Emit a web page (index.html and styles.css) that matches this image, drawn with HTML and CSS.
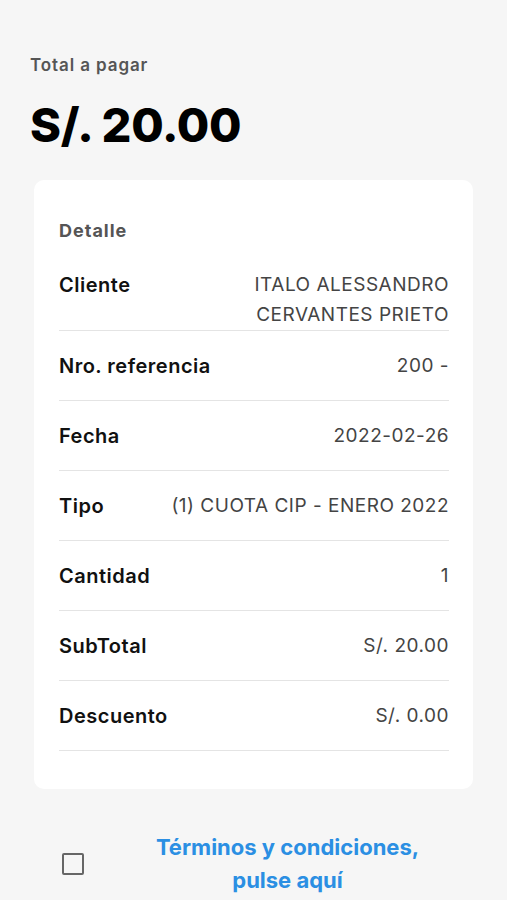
FILE: index.html
```html
<!DOCTYPE html>
<html lang="es">
<head>
<meta charset="utf-8">
<title>Total a pagar</title>
<link rel="stylesheet" href="styles.css">
</head>
<body>
<main class="page">
  <section class="summary">
    <div class="summary-label">Total a pagar</div>
    <div class="summary-amount">S/. 20.00</div>
  </section>
  <section class="card">
    <div class="card-title">Detalle</div>
    <div class="row">
      <div class="row-label">Cliente</div>
      <div class="row-value">ITALO ALESSANDRO<br>CERVANTES PRIETO</div>
    </div>
    <div class="row">
      <div class="row-label">Nro. referencia</div>
      <div class="row-value">200 -</div>
    </div>
    <div class="row">
      <div class="row-label">Fecha</div>
      <div class="row-value">2022-02-26</div>
    </div>
    <div class="row">
      <div class="row-label">Tipo</div>
      <div class="row-value">(1) CUOTA CIP - ENERO 2022</div>
    </div>
    <div class="row">
      <div class="row-label">Cantidad</div>
      <div class="row-value">1</div>
    </div>
    <div class="row">
      <div class="row-label">SubTotal</div>
      <div class="row-value">S/. 20.00</div>
    </div>
    <div class="row">
      <div class="row-label">Descuento</div>
      <div class="row-value">S/. 0.00</div>
    </div>
  </section>
  <section class="terms">
    <span class="checkbox"></span>
    <a class="terms-link" href="#">Términos y condiciones,<br>pulse aquí</a>
  </section>
</main>
</body>
</html>
```

FILE: styles.css
```css
* { box-sizing: border-box; }

html, body {
  margin: 0;
  padding: 0;
  background: #f6f6f6;
}

body {
  font-family: Inter, "Open Sans", "DejaVu Sans", sans-serif;
  color: #111;
}

.page {
  padding: 54px 0 0;
}

.summary {
  padding: 0 30px;
}

.summary-label {
  font-size: 17px;
  font-weight: 600;
  color: #555;
  line-height: 22px;
  letter-spacing: 0.9px;
}

.summary-amount {
  margin-top: 20px;
  font-size: 47px;
  font-weight: 800;
  line-height: 58px;
  color: #000;
  letter-spacing: -0.3px;
}

.card {
  margin: 26px 34px 0;
  background: #fff;
  border-radius: 10px;
  padding: 38px 24px 38px 25px;
}

.card-title {
  font-size: 18px;
  font-weight: 700;
  color: #555;
  line-height: 26px;
  letter-spacing: 1px;
  margin-bottom: 6px;
}

.row {
  display: flex;
  justify-content: space-between;
  align-items: flex-start;
  min-height: 70px;
  padding-top: 20px;
  border-bottom: 1px solid #e4e4e4;
}

.row-label {
  font-size: 20px;
  font-weight: 600;
  line-height: 30px;
  letter-spacing: 0.5px;
  color: #111;
  white-space: nowrap;
}

.row-value {
  font-size: 19px;
  font-weight: 400;
  line-height: 30px;
  letter-spacing: 0.5px;
  color: #444;
  text-align: right;
}

.terms {
  display: flex;
  align-items: center;
  padding: 42px 16px 0 62px;
}

.checkbox {
  flex: none;
  width: 22px;
  height: 22px;
  border: 2.5px solid #666;
  border-radius: 2px;
}

.terms-link {
  flex: 1;
  text-align: center;
  font-size: 22px;
  font-weight: 700;
  line-height: 33px;
  color: #2b8fe3;
  text-decoration: none;
}
```
